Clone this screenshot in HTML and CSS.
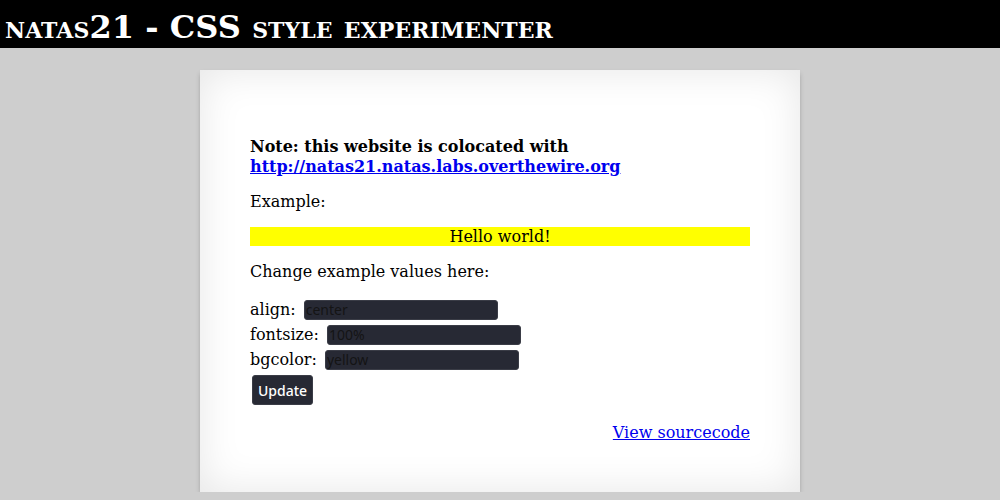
FILE: index.html
```html
<!DOCTYPE html>
<html>
<head>
<meta charset="utf-8">
<title>natas21</title>
<link rel="stylesheet" href="styles.css">
</head>
<body>
<h1 class="title">natas21 - CSS style experimenter</h1>
<div class="content">
  <p class="note"><b>Note: this website is colocated with <a href="#">http://natas21.natas.labs.overthewire.org</a></b></p>
  <p class="label-example">Example:</p>
  <div class="example">Hello world!</div>
  <p>Change example values here:</p>
  <form class="form">
    <div class="row">align: <input class="field" name="align" value="center"></div>
    <div class="row">fontsize: <input class="field" name="fontsize" value="100%"></div>
    <div class="row">bgcolor: <input class="field" name="bgcolor" value="yellow"></div>
    <button class="btn" type="button">Update</button>
  </form>
  <div class="source"><a href="#">View sourcecode</a></div>
</div>
</body>
</html>
```
FILE: styles.css
```css
html, body {
  margin: 0;
  padding: 0;
}
body {
  background: #cecece;
  font-family: "DejaVu Serif", serif;
  font-size: 16px;
  line-height: 19px;
  color: #000;
}
.title {
  margin: 0;
  background: #000;
  color: #fff;
  font-variant: small-caps;
  font-size: 32px;
  letter-spacing: 0.06px;
  font-weight: bold;
  height: 48px;
  line-height: 54px;
  padding: 0 5px;
  box-sizing: border-box;
}
.content {
  width: 500px;
  margin: 22px auto 0;
  padding: 50px 50px 50px;
  background: #fff;
  box-shadow: 0 3px 5px -1px rgba(0,0,0,0.3), 0 0 40px rgba(0,0,0,0.1) inset;
}
.content p {
  margin: 16px 0;
}
.content .note {
  line-height: 20px;
  padding-top: 1px;
  margin-bottom: 15px;
}
.content .label-example {
  margin-top: 15px;
}
a {
  color: #0000ee;
}
.example {
  background: yellow;
  text-align: center;
  line-height: 19px;
}
.form {
  margin-top: 16px;
}
.row {
  height: 25px;
  display: flex;
  align-items: center;
  gap: 8px;
}
.field {
  width: 194px;
  height: 20px;
  box-sizing: border-box;
  background: #272934;
  color: #141414;
  border: 1px solid #3a3c46;
  border-radius: 3px;
  padding: 0 1px;
  font-family: "Noto Sans", sans-serif;
  font-size: 14px;
}
.btn {
  margin: 3px 0 0 2px;
  width: 61px;
  height: 30px;
  background: #272934;
  color: #fff;
  border: 1px solid #3a3c46;
  border-radius: 3px;
  font-family: "Noto Sans", sans-serif;
  font-size: 14px;
  font-weight: 500;
  padding: 0;
}
.source {
  text-align: right;
  margin-top: 18px;
}
```
